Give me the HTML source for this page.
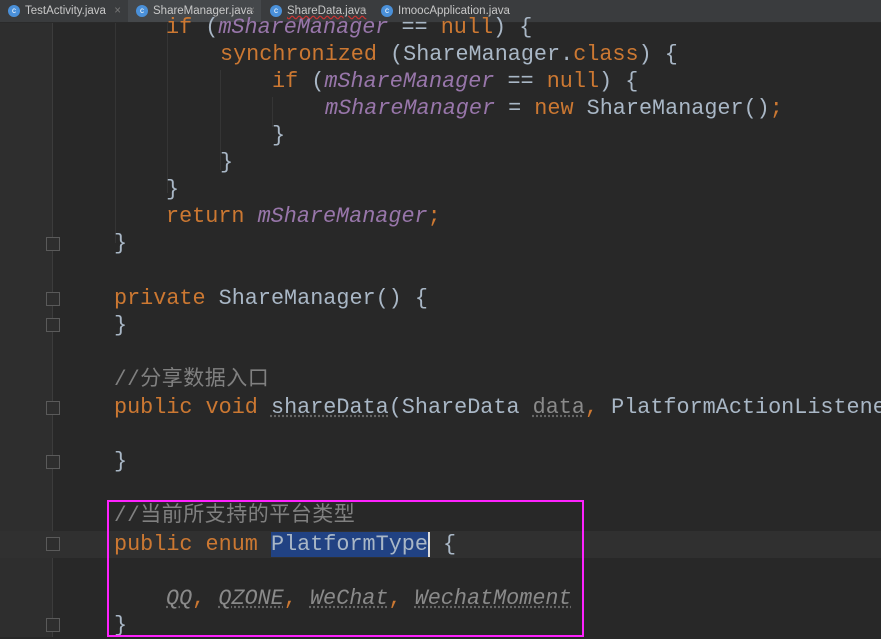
<!DOCTYPE html>
<html><head><meta charset="utf-8"><style>
html,body{margin:0;padding:0;}
body{width:881px;height:637px;overflow:hidden;background:#282828;position:relative;font-family:"Liberation Mono","Noto Sans CJK SC",monospace;}
.tabs{position:absolute;left:0;top:0;width:881px;height:22px;background:#3a3c3e;border-bottom:1px solid #2a2a2a;font-family:"Liberation Sans",sans-serif;font-size:11.5px;color:#c8c8c8;}
.tab{position:absolute;top:0;height:22px;line-height:22px;padding-left:25px;box-sizing:border-box;white-space:nowrap;overflow:hidden;}
.tab.act{background:#45484b;}
.tab i{position:absolute;left:8px;top:5px;width:12px;height:12px;border-radius:50%;background:#4a90d9;color:#fff;font-style:normal;font-size:8px;line-height:12px;text-align:center;}
.tab b{font-weight:normal;color:#777;position:absolute;right:6px;top:0;}
.gut{position:absolute;left:0;top:23px;width:52px;height:614px;background:#2e2e2e;}
.fl{position:absolute;left:52px;top:23px;width:1px;height:614px;background:#3c3c3c;}
.cur{position:absolute;left:0;top:531px;width:881px;height:27px;background:#303030;}
.ln{position:absolute;left:114px;font-size:21.8px;line-height:27px;height:27px;white-space:pre;color:#a9b7c6;}
.k{color:#cc7832}.p{color:#9876aa;font-style:italic}.c{color:#808080;font-size:21px;letter-spacing:0.5px}
.u{text-decoration:underline;text-decoration-color:#666;text-decoration-style:dotted}
.f{position:absolute;left:46px;width:12px;height:12px;border:1px solid #5a5a5a;background:#2e2e2e;}
.box{position:absolute;left:107px;top:500px;width:473px;height:133px;border:2px solid #ff22ff;}
.sel{background:#214283;}
.ig{position:absolute;width:1px;background:#353535;}
</style></head><body>
<div class="tabs">
<div class="tab" style="left:0;width:127px"><i>c</i>TestActivity.java<b>×</b></div>
<div class="tab act" style="left:128px;width:133px"><i>c</i>ShareManager.java<b>×</b></div>
<div class="tab" style="left:262px;width:110px"><i>c</i><span style="text-decoration:underline wavy #c33">ShareData.java</span><b>×</b></div>
<div class="tab" style="left:373px;width:142px"><i>c</i>ImoocApplication.java<b>×</b></div>
</div>
<div class="gut"></div><div class="fl"></div>
<div class="cur"></div>
<div class="ig" style="left:115px;top:23px;height:220px"></div>
<div class="ig" style="left:167px;top:23px;height:170px"></div>
<div class="ig" style="left:220px;top:70px;height:100px"></div>
<div class="ig" style="left:272px;top:97px;height:30px"></div>
<div class="f" style="top:237px"></div>
<div class="f" style="top:292px"></div>
<div class="f" style="top:318px"></div>
<div class="f" style="top:401px"></div>
<div class="f" style="top:455px"></div>
<div class="f" style="top:537px"></div>
<div class="f" style="top:618px"></div>
<div class="ln" style="top:14px;left:166px"><span class="k">if</span> (<span class="p">mShareManager</span> == <span class="k">null</span>) {</div>
<div class="ln" style="top:41px;left:220px"><span class="k">synchronized</span> (ShareManager.<span class="k">class</span>) {</div>
<div class="ln" style="top:68px;left:272px"><span class="k">if</span> (<span class="p">mShareManager</span> == <span class="k">null</span>) {</div>
<div class="ln" style="top:95px;left:325px"><span class="p">mShareManager</span> = <span class="k">new</span> ShareManager()<span class="k">;</span></div>
<div class="ln" style="top:122px;left:272px">}</div>
<div class="ln" style="top:149px;left:220px">}</div>
<div class="ln" style="top:176px;left:166px">}</div>
<div class="ln" style="top:203px;left:166px"><span class="k">return</span> <span class="p">mShareManager</span><span class="k">;</span></div>
<div class="ln" style="top:230px">}</div>
<div class="ln" style="top:285px"><span class="k">private</span> ShareManager() {</div>
<div class="ln" style="top:312px">}</div>
<div class="ln c" style="top:367px">//分享数据入口</div>
<div class="ln" style="top:394px"><span class="k">public void</span> <span class="u">shareData</span>(ShareData <span class="u" style="color:#8a8a8a">data</span><span class="k">,</span> PlatformActionListener</div>
<div class="ln" style="top:448px">}</div>
<div class="ln c" style="top:503px">//当前所支持的平台类型</div>
<div class="ln" style="top:531px"><span class="k">public enum</span> <span class="sel">PlatformType</span><span style="border-left:2px solid #ddd"></span> {</div>
<div class="ln" style="top:585px;left:166px;color:#8a8a8a;font-style:italic"><span class="u">QQ</span><span class="k" style="font-style:normal">,</span> <span class="u">QZONE</span><span class="k" style="font-style:normal">,</span> <span class="u">WeChat</span><span class="k" style="font-style:normal">,</span> <span class="u">WechatMoment</span></div>
<div class="ln" style="top:612px">}</div>
<div class="box"></div>
</body></html>
